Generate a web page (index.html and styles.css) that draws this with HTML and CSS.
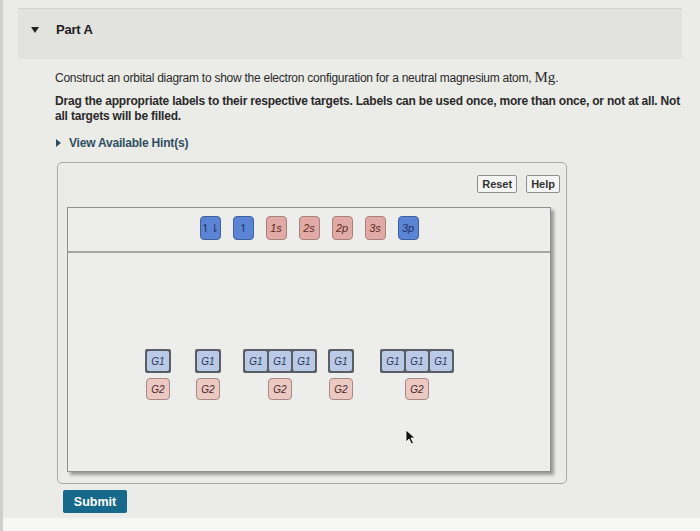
FILE: index.html
```html
<!DOCTYPE html>
<html>
<head>
<meta charset="utf-8">
<link rel="stylesheet" href="styles.css">
</head>
<body>
<div class="page">
  <div class="part-header">
    <span class="caret-down"></span>
    <span class="part-title">Part A</span>
  </div>
  <div class="content">
    <p class="question">Construct an orbital diagram to show the electron configuration for a neutral magnesium atom, <span class="math">Mg</span>.</p>
    <p class="instructions">Drag the appropriate labels to their respective targets. Labels can be used once, more than once, or not at all. Not all targets will be filled.</p>
    <div class="hint"><span class="caret-right"></span>View Available Hint(s)</div>

    <div class="outer-box">
      <div class="toolbar">
        <span class="tool-btn">Reset</span>
        <span class="tool-btn">Help</span>
      </div>
      <div class="inner-box">
        <div class="token-bar">
          <span class="token blue">↿⇂</span>
          <span class="token blue">↿</span>
          <span class="token pink"><i>1s</i></span>
          <span class="token pink"><i>2s</i></span>
          <span class="token pink"><i>2p</i></span>
          <span class="token pink"><i>3s</i></span>
          <span class="token blue"><i>3p</i></span>
        </div>
        <div class="drop-area">
          <div class="group g-a">
            <div class="row-g1"><span class="cell g1">G1</span></div>
            <span class="cell g2">G2</span>
          </div>
          <div class="group g-b">
            <div class="row-g1"><span class="cell g1">G1</span></div>
            <span class="cell g2">G2</span>
          </div>
          <div class="group g-c">
            <div class="row-g1"><span class="cell g1">G1</span><span class="cell g1">G1</span><span class="cell g1">G1</span></div>
            <span class="cell g2">G2</span>
          </div>
          <div class="group g-d">
            <div class="row-g1"><span class="cell g1">G1</span></div>
            <span class="cell g2">G2</span>
          </div>
          <div class="group g-e">
            <div class="row-g1"><span class="cell g1">G1</span><span class="cell g1">G1</span><span class="cell g1">G1</span></div>
            <span class="cell g2">G2</span>
          </div>
          <svg class="cursor" width="12" height="16" viewBox="0 0 12 16"><path d="M1 1 L1 13 L4 10 L6.5 15 L8.5 14 L6 9 L10 9 Z" fill="#111" stroke="#fff" stroke-width="0.8"/></svg>
        </div>
      </div>
    </div>

    <button class="submit">Submit</button>
  </div>
</div>
<div class="footer-strip"></div>
</body>
</html>
```
FILE: styles.css
```css
html, body {
  margin: 0;
  padding: 0;
}
body {
  background: #ebebe8;
  font-family: "Liberation Sans", Arial, sans-serif;
  color: #222;
  width: 700px;
  height: 531px;
  overflow: hidden;
  border-left: 3px solid #cfcfcb;
  box-sizing: border-box;
}
.page {
  padding: 8px 18px 0 15px;
  height: 510px;
}
.part-header {
  height: 51px;
  background: #e2e2df;
  border-top: 1px solid #d3d3cf;
  display: flex;
  align-items: flex-start;
  padding-top: 13px;
  box-sizing: border-box;
}
.caret-down {
  width: 0;
  height: 0;
  border-left: 4px solid transparent;
  border-right: 4px solid transparent;
  border-top: 6px solid #222;
  margin: 5px 0 0 13px;
}
.part-title {
  font-weight: bold;
  font-size: 13px;
  margin-left: 17px;
  color: #1e1e1e;
  letter-spacing: -0.2px;
}
.content {
  padding-left: 37px;
}
.question {
  font-size: 12px;
  letter-spacing: -0.25px;
  margin: 10px 0 0 0;
  color: #2a2a2a;
}
.math {
  font-family: "Liberation Serif", "Times New Roman", serif;
  font-size: 15px;
  letter-spacing: 0;
}
.instructions {
  font-size: 12px;
  letter-spacing: -0.2px;
  font-weight: bold;
  margin: 8px 0 0 0;
  line-height: 15px;
  color: #2a2a2a;
  width: 625px;
}
.hint {
  margin-top: 12px;
  font-size: 12px;
  letter-spacing: -0.2px;
  font-weight: bold;
  color: #2f4f61;
  display: flex;
  align-items: center;
}
.caret-right {
  width: 0;
  height: 0;
  border-top: 4px solid transparent;
  border-bottom: 4px solid transparent;
  border-left: 5px solid #2f4f61;
  margin: 0 8px 0 1px;
}
.outer-box {
  margin-top: 12px;
  margin-left: 2px;
  width: 510px;
  height: 322px;
  border: 1px solid #a9a9a6;
  border-radius: 5px;
  box-sizing: border-box;
}
.toolbar {
  display: flex;
  justify-content: flex-end;
  gap: 9px;
  padding-top: 12px;
  padding-right: 6px;
  height: 44px;
  box-sizing: border-box;
}
.tool-btn {
  font-size: 11px;
  font-weight: bold;
  color: #333;
  background: #f4f4f2;
  border: 1px solid #8e8e8b;
  border-radius: 2px;
  padding: 2px 4px;
  height: 18px;
  box-sizing: border-box;
  line-height: 13px;
}
.inner-box {
  margin-left: 9px;
  width: 484px;
  height: 265px;
  border: 1px solid #8f8f8c;
  background: #ededeb;
  box-shadow: 3px 3px 3px rgba(0,0,0,0.35);
  box-sizing: border-box;
}
.token-bar {
  height: 45px;
  border-bottom: 2px solid #a5a5a2;
  display: flex;
  justify-content: center;
  align-items: center;
  gap: 12px;
  box-sizing: border-box;
  padding-bottom: 3px;
}
.token {
  width: 21px;
  height: 24px;
  border-radius: 4px;
  box-sizing: border-box;
  display: flex;
  align-items: center;
  justify-content: center;
  font-size: 11px;
}
.token.blue {
  background: #5b84d4;
  border: 1px solid #3f5f9d;
  color: #1f3466;
}
.token.pink {
  background: #e2aaa4;
  border: 1px solid #a8817c;
  color: #5a2a26;
}
.drop-area {
  position: relative;
  display: flex;
  padding: 96px 0 0 77px;
}
.group {
  display: flex;
  flex-direction: column;
  align-items: center;
  gap: 5px;
}
.g-a { margin-right: 24px; }
.g-b { margin-right: 22px; }
.g-c { margin-right: 11px; }
.g-d { margin-right: 26px; }
.row-g1 {
  display: flex;
  border: 2px solid #5a5f66;
  border-radius: 2px;
  gap: 2px;
  background: #5a5f66;
}
.cell {
  width: 22px;
  height: 20px;
  display: flex;
  align-items: center;
  justify-content: center;
  font-size: 10px;
  font-style: italic;
  box-sizing: border-box;
}
.cell.g1 {
  background: #b9c9e6;
  color: #2b3a58;
  border-radius: 2px;
}
.cell.g2 {
  width: 24px;
  height: 22px;
  background: #ecc8c3;
  border: 1px solid #a88884;
  border-radius: 4px;
  color: #4a2a28;
}
.cursor {
  position: absolute;
  left: 337px;
  top: 176px;
}
.submit {
  margin-top: 6px;
  margin-left: 8px;
  background: #17698b;
  color: #fff;
  font-family: "Liberation Sans", Arial, sans-serif;
  font-weight: bold;
  font-size: 12.5px;
  border: none;
  border-radius: 2px;
  width: 64px;
  height: 23px;
  padding: 0;
}
.footer-strip {
  height: 21px;
  background: #f6f6f4;
}
```
